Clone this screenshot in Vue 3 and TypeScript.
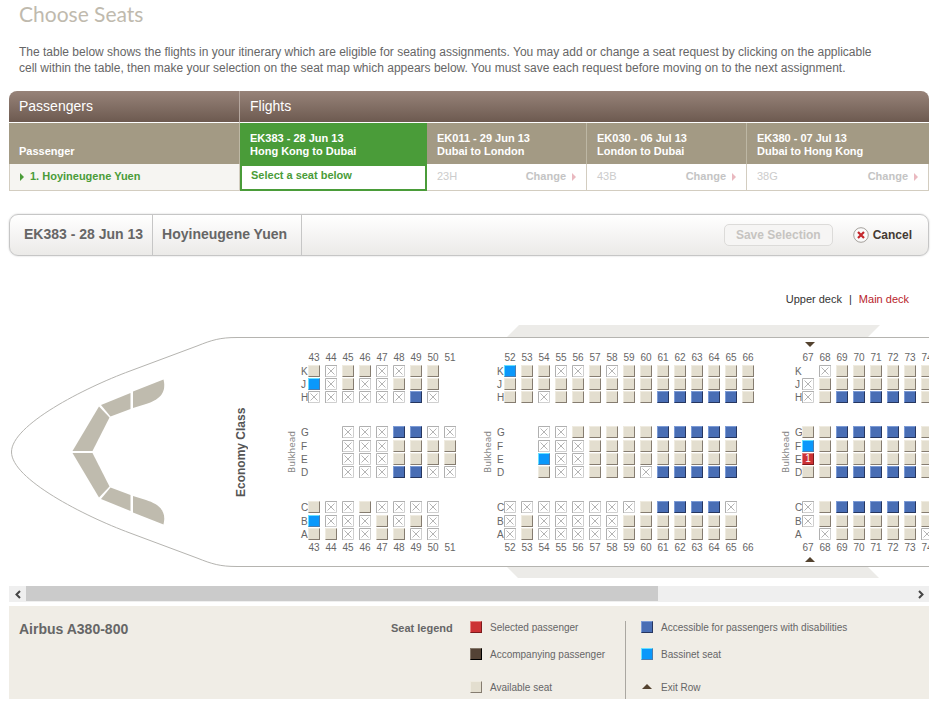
<script setup lang="ts">
import { computed, onMounted, ref } from 'vue'

type SeatKind = 'a' | 'x' | 'b' | 'd' | 's' | '.'

interface Flight {
  code: string
  route: string
  seat: string | null
}

interface Block {
  first: number
  exit: boolean
  rows: Record<string, string>
}

const flights: Flight[] = [
  { code: 'EK383 - 28 Jun 13', route: 'Hong Kong to Dubai', seat: null },
  { code: 'EK011 - 29 Jun 13', route: 'Dubai to London', seat: '23H' },
  { code: 'EK030 - 06 Jul 13', route: 'London to Dubai', seat: '43B' },
  { code: 'EK380 - 07 Jul 13', route: 'Dubai to Hong Kong', seat: '38G' },
]

// a = available, x = taken, b = bassinet, d = accessible, s = selected, . = no seat
const blocks: Block[] = [
  {
    first: 43,
    exit: false,
    rows: {
      K: 'axaaxxaa.',
      J: 'bxaxxaaa.',
      H: 'xxxxxxdx.',
      G: '..xxxddxx',
      F: '..xxxaaaa',
      E: '..xxxaaaa',
      D: '..xxxddxx',
      C: 'axxaxxxx.',
      B: 'bxxxaxax.',
      A: 'aaxxaaxx.',
    },
  },
  {
    first: 52,
    exit: false,
    rows: {
      K: 'baaxxaxaaaaaaaa',
      J: 'aaaaaaaaaaaaaaa',
      H: 'aaxaaaaaaddddda',
      G: '..xxaaaaaddddd.',
      F: '..xxxaaaaaaaaa.',
      E: '..bxxaaaaaaaaa.',
      D: '..axxaaaxddddd.',
      C: 'xxxxxxxxaddddx.',
      B: 'xaxxxxxaaaaaaa.',
      A: 'xaxxxxxaaaaaaa.',
    },
  },
  {
    first: 67,
    exit: true,
    rows: {
      K: '.xaaaaaa',
      J: 'xaaaaaaa',
      H: 'xaddddda',
      G: 'aaddddda',
      F: 'baaaaaaa',
      E: 'saaaaaaa',
      D: 'aaddddda',
      C: 'xaddddda',
      B: 'xaaaaaaa',
      A: '.xaaaaax',
    },
  },
]

const aisles = [
  ['K', 'J', 'H'],
  ['G', 'F', 'E', 'D'],
  ['C', 'B', 'A'],
]

const numbers = (b: Block): number[] => Array.from(b.rows.J, (_, i) => b.first + i)
const seats = (b: Block, letter: string): SeatKind[] => Array.from(b.rows[letter]) as SeatKind[]

const kindName: Record<SeatKind, string> = {
  a: 'available',
  x: 'taken',
  b: 'bassinet',
  d: 'accessible',
  s: 'selected',
  '.': 'none',
}

const viewport = ref<HTMLElement | null>(null)
const scrolled = ref(0)
const visible = ref(0.713)

function measure() {
  const el = viewport.value
  if (!el) return
  visible.value = Math.min(1, el.clientWidth / el.scrollWidth)
  scrolled.value = el.scrollLeft / el.scrollWidth
}

function scroll(step: number) {
  viewport.value?.scrollBy({ left: step })
}

const thumb = computed(() => ({
  width: `${visible.value * 100}%`,
  marginLeft: `${scrolled.value * 100}%`,
}))

onMounted(measure)
</script>

<template>
  <main class="page">
    <h1>Choose Seats</h1>
    <p class="intro">
      The table below shows the flights in your itinerary which are eligible for seating assignments. You may add or
      change a seat request by clicking on the applicable cell within the table, then make your selection on the seat
      map which appears below. You must save each request before moving on to the next assignment.
    </p>

    <table class="trips">
      <colgroup>
        <col class="col-name" />
        <col class="col-active" />
        <col class="col-flight" />
        <col class="col-flight" />
        <col />
      </colgroup>
      <thead>
        <tr class="titles">
          <th>Passengers</th>
          <th colspan="4">Flights</th>
        </tr>
        <tr class="heads">
          <th>Passenger</th>
          <th v-for="f in flights" :key="f.code" :class="{ active: !f.seat }">{{ f.code }}<br />{{ f.route }}</th>
        </tr>
      </thead>
      <tbody>
        <tr>
          <td class="person"><span class="arrow"></span>1. Hoyineugene Yuen</td>
          <td v-for="f in flights" :key="f.code" :class="{ active: !f.seat }">
            <template v-if="!f.seat">Select a seat below</template>
            <div v-else class="choice">
              <span>{{ f.seat }}</span>
              <a href="#">Change<span class="arrow"></span></a>
            </div>
          </td>
        </tr>
      </tbody>
    </table>

    <section class="toolbar">
      <strong class="flight">EK383 - 28 Jun 13</strong>
      <strong class="name">Hoyineugene Yuen</strong>
      <div class="actions">
        <button type="button" class="save" disabled>Save Selection</button>
        <button type="button" class="cancel">
          <svg width="16" height="16" viewBox="0 0 16 16" aria-hidden="true">
            <circle cx="8" cy="8" r="7.3" fill="#fafafa" stroke="#a5a19c" />
            <path d="M5 5l6 6M11 5l-6 6" stroke="#c4282d" stroke-width="2.2" />
          </svg>
          Cancel
        </button>
      </div>
    </section>

    <nav class="decks">
      <a href="#">Upper deck</a><span>|</span><a href="#" class="current">Main deck</a>
    </nav>

    <div ref="viewport" class="viewport" @scroll="measure">
      <div class="cabin">
        <svg class="hull" width="1290" height="254" viewBox="0 0 1290 254" aria-hidden="true">
          <defs>
            <g id="hull-half">
              <path d="M498 12L510 0H871L859 12Z" fill="#ecebe8" />
              <path
                d="M1290 12.5H228C211 12.5 203 15 188 21L121 46C75 63 2.500 100 2.500 127"
                fill="none"
                stroke="#b5b4b0"
              />
              <g fill="#bfbbae">
                <path d="M154.500 54.500C158 69 149 75 137 79L124 83V66.500Z" />
                <path d="M121.500 68V84L101.500 91.500L92 80Z" />
                <path d="M90 81.500L100.500 92.500L83.500 126H63.500Z" />
              </g>
            </g>
          </defs>
          <use href="#hull-half" />
          <use href="#hull-half" transform="matrix(1 0 0 -1 0 254)" />
        </svg>

        <div class="layout">
          <strong class="cabin-name">Economy Class</strong>
          <div v-for="b in blocks" :key="b.first" class="block">
            <span class="bulkhead">Bulkhead</span>
            <div class="seating">
              <div class="exit"><i v-if="b.exit" class="exit-mark down"></i></div>
              <div class="numbers top">
                <span v-for="n in numbers(b)" :key="n">{{ n }}</span>
              </div>
              <div class="groups">
                <div v-for="group in aisles" :key="group[0]" class="group">
                  <div v-for="letter in group" :key="letter" class="line">
                    <span class="letter">{{ letter }}</span>
                    <span v-for="(kind, i) in seats(b, letter)" :key="i" class="cell">
                      <svg v-if="kind === 'x'" width="12" height="12" viewBox="0 0 12 12">
                        <path d="M11.500 0V11.500H0" fill="none" stroke="#cfcfcf" />
                        <path d="M0.500 12V0.500H12" fill="none" stroke="#b0b0b0" />
                        <path d="M2.500 2.500L9.500 9.500M9.500 2.500L2.500 9.500" stroke="#b4b4b4" />
                      </svg>
                      <button
                        v-else-if="kind !== '.'"
                        type="button"
                        class="seat"
                        :class="kindName[kind]"
                        :aria-label="`${b.first + i}${letter}`"
                      >{{ kind === 's' ? '1' : '' }}</button>
                    </span>
                  </div>
                </div>
              </div>
              <div class="numbers">
                <span v-for="n in numbers(b)" :key="n">{{ n }}</span>
              </div>
              <div class="exit"><i v-if="b.exit" class="exit-mark"></i></div>
            </div>
          </div>
        </div>
      </div>
    </div>

    <div class="scrollbar">
      <button type="button" aria-label="Scroll left" @click="scroll(-68)">
        <svg width="8" height="9" viewBox="0 0 8 9"><path d="M6 1L2.500 4.500L6 8" /></svg>
      </button>
      <div class="track"><div class="thumb" :style="thumb"></div></div>
      <button type="button" aria-label="Scroll right" @click="scroll(68)">
        <svg width="8" height="9" viewBox="0 0 8 9"><path d="M2 1L5.500 4.500L2 8" /></svg>
      </button>
    </div>

    <footer class="legend">
      <h2>Airbus A380-800</h2>
      <h3>Seat legend</h3>
      <ul>
        <li><i class="seat selected"></i>Selected passenger</li>
        <li><i class="seat companion"></i>Accompanying passenger</li>
        <li><i class="seat available"></i>Available seat</li>
      </ul>
      <ul class="second">
        <li><i class="seat accessible"></i>Accessible for passengers with disabilities</li>
        <li><i class="seat bassinet"></i>Bassinet seat</li>
        <li><i class="exit-mark"></i>Exit Row</li>
      </ul>
    </footer>
  </main>
</template>

<style>
body {
  margin: 0;
  background: #fff;
}
</style>

<style scoped>
.page {
  box-sizing: border-box;
  padding: 0 20px 16px 9px;
  font: 12px/16px 'Liberation Sans', Arial, sans-serif;
  color: #666;
}

button {
  margin: 0;
  font-family: inherit;
  cursor: pointer;
}

a {
  color: inherit;
  text-decoration: none;
}

h1 {
  margin: 0 10px;
  font: 400 21px/28px Lato, sans-serif;
  color: #bfbaae;
}

.intro {
  margin: 16px 40px 15px 10px;
}

.trips {
  width: 100%;
  table-layout: fixed;
  border-collapse: separate;
  border-spacing: 0;
  text-align: left;
  font-size: 11px;
  line-height: 13px;
}

.col-name {
  width: 231px;
}

.col-active {
  width: 187px;
}

.col-flight {
  width: 160px;
}

.trips th,
.trips td {
  box-sizing: border-box;
  padding: 0 10px;
}

.titles th {
  height: 32px;
  border-bottom: 1px solid #fff;
  background: linear-gradient(#978379, #6d5a50);
  background-clip: padding-box;
  font-size: 14px;
  font-weight: 400;
  color: #fff;
}

.titles th:first-child {
  border-right: 1px solid #b5a79f;
  border-top-left-radius: 8px;
}

.titles th:last-child {
  border-top-right-radius: 8px;
}

.heads th {
  height: 41px;
  padding-bottom: 6px;
  border-right: 1px solid #bdb7a4;
  background: #a39a84;
  vertical-align: bottom;
  color: #fff;
}

.heads th:last-child {
  border-right: 0;
}

.heads th.active {
  border-right-color: #4a9c39;
  background: #4a9c39;
}

.trips td {
  height: 27px;
  padding-bottom: 2px;
  border-right: 1px solid #d3cdc0;
  border-bottom: 1px solid #d3cdc0;
  color: #ccc;
}

.trips td.person {
  border-left: 1px solid #d3cdc0;
  background: #f6f5f2;
  font-weight: 700;
  color: #4a9c39;
}

.trips td.active {
  border: 2px solid #4a9c39;
  padding: 0 9px 4px;
  font-weight: 700;
  color: #4a9c39;
}

.arrow {
  display: inline-block;
  border: solid transparent;
  border-width: 4px 0 4px 4px;
  border-left-color: currentColor;
  vertical-align: -1px;
}

.person .arrow {
  margin-right: 6px;
}

.choice {
  display: flex;
  justify-content: space-between;
}

.choice a {
  font-weight: 700;
  color: #c4c4c4;
}

.choice .arrow {
  margin-left: 6px;
  border-left-color: #eab9c0;
}

.toolbar {
  display: flex;
  margin-top: 23px;
  border: 1px solid #c6c6c6;
  border-radius: 9px;
  background: linear-gradient(#fff, #ebeae8);
  box-shadow: 0 0 2px #ccc;
}

.toolbar strong {
  border-right: 1px solid #c6c6c6;
  font-size: 14px;
  line-height: 38px;
}

.toolbar .flight {
  padding: 0 9px 2px 14px;
}

.toolbar .name {
  padding: 0 14px 2px 9px;
}

.actions {
  display: flex;
  align-items: center;
  gap: 20px;
  margin-left: auto;
  padding-right: 16px;
}

.actions button {
  font-size: 12px;
  font-weight: 700;
}

.save {
  height: 22px;
  padding: 0 11px;
  border: 1px solid #dcdbd9;
  border-radius: 5px;
  background: #f6f5f4;
  line-height: 18px;
  color: #c6c4c1;
}

.cancel {
  display: flex;
  align-items: center;
  gap: 4px;
  padding: 0;
  border: 0;
  background: none;
  color: #443a33;
}

.decks {
  display: flex;
  justify-content: flex-end;
  gap: 7px;
  margin: 35px 20px 18px;
  font-size: 11px;
  color: #333;
}

.decks .current {
  color: #b8242b;
}

.viewport {
  overflow: hidden;
}

.cabin {
  position: relative;
  width: 1290px;
}

.hull {
  position: absolute;
  top: 0;
  left: 0;
}

.layout {
  position: relative;
  display: flex;
  gap: 20px;
  padding: 17px 0 16px 224px;
}

.cabin-name,
.bulkhead {
  display: flex;
  align-items: center;
  justify-content: center;
  writing-mode: vertical-rl;
  transform: rotate(180deg);
}

.cabin-name {
  width: 16px;
  margin-right: 16px;
  color: #555;
}

.block {
  display: flex;
}

.bulkhead {
  width: 14px;
  margin-right: 2px;
  font: 9px/14px 'DejaVu Sans', sans-serif;
  color: #888;
}

.seating {
  font-size: 10px;
  line-height: 13px;
}

.exit {
  display: flex;
  height: 8px;
  padding-left: 10px;
}

.exit-mark {
  width: 0;
  height: 0;
  border: solid transparent;
  border-width: 0 5px 5px;
  border-bottom-color: #54432f;
}

.exit-mark.down {
  border-width: 5px 5px 0;
  border-top-color: #54432f;
}

.seating > .exit:last-child {
  align-items: flex-end;
}

.numbers {
  display: flex;
  padding-left: 7px;
}

.numbers.top {
  padding: 1px 0 1px 7px;
}

.numbers span {
  width: 12px;
  margin-right: 5px;
  text-align: center;
}

.groups {
  display: grid;
  gap: 22px;
}

.group {
  display: grid;
}

.line {
  display: flex;
  height: 13px;
}

.group:not(:first-child) .line:first-child {
  height: 14px;
}

.letter {
  width: 7px;
}

.cell {
  width: 12px;
  height: 12px;
  margin-right: 5px;
}

.cell svg {
  display: block;
}

.seat {
  display: block;
  box-sizing: border-box;
  width: 12px;
  height: 12px;
  padding: 0;
  border: 1px solid;
  font-size: 10px;
  line-height: 10px;
  text-align: center;
  color: #fff;
}

.available {
  border-color: #efebe0 #857c70 #857c70 #efebe0;
  background: #e3decf;
}

.accessible {
  border-color: #7c9bd6 #26365f #26365f #7c9bd6;
  background: #496eb5;
}

.bassinet {
  border-color: #66e0ff #4c7cae #4c7cae #66e0ff;
  background: #0a98fb;
}

.selected {
  border-color: #e58080 #7c1a1c #7c1a1c #e58080;
  background: #cc3235;
}

.companion {
  border-color: #85786b #000 #000 #85786b;
  background: #544336;
}

.scrollbar {
  display: flex;
  margin: 8px 0 4px;
  background: #efefef;
}

.scrollbar button {
  display: flex;
  align-items: center;
  justify-content: center;
  width: 17px;
  height: 16px;
  padding: 0;
  border: 0;
  background: none;
}

.scrollbar path {
  fill: none;
  stroke: #444;
  stroke-width: 2;
}

.track {
  flex: 1;
}

.thumb {
  height: 15px;
  background: #cbcbcb;
}

.legend {
  display: flex;
  padding: 15px 10px 0;
  background: #f0ede6;
}

.legend h2 {
  flex: 0 0 372px;
  margin: 0;
  font-size: 14px;
}

.legend h3 {
  flex: 0 0 79px;
  margin: 0;
  font-size: 11px;
  line-height: 14px;
}

.legend ul {
  display: grid;
  grid-template-rows: 27px 33px 18px;
  flex: 0 0 155px;
  margin: 0;
  padding: 0;
  list-style: none;
  font-size: 10px;
  line-height: 14px;
  white-space: nowrap;
}

.legend .second {
  flex: 1;
  padding-left: 15px;
  border-left: 1px solid #aaa7a1;
}

.legend li {
  display: flex;
  align-items: flex-start;
  gap: 8px;
}

.legend .exit-mark {
  margin: 3px 1px 0;
}
</style>
